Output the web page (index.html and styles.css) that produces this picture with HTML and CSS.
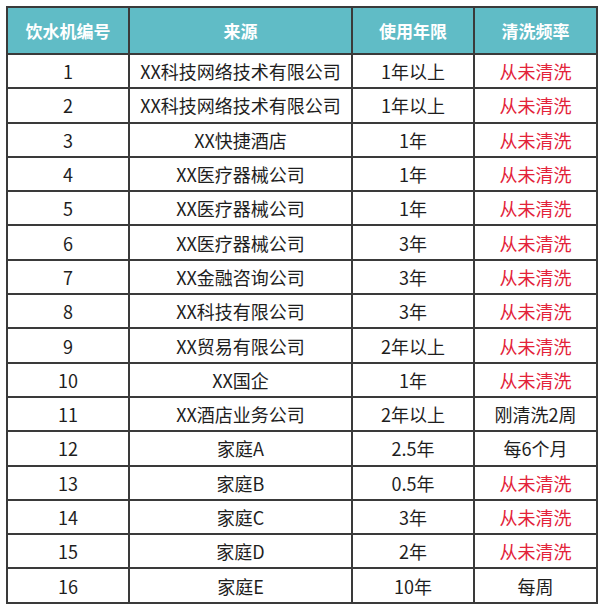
FILE: index.html
```html
<!DOCTYPE html>
<html lang="zh">
<head>
<meta charset="utf-8">
<link rel="stylesheet" href="styles.css">
</head>
<body>
<table class="tbl">
  <colgroup>
    <col class="c1"><col class="c2"><col class="c3"><col class="c4">
  </colgroup>
  <thead>
    <tr><th>饮水机编号</th><th>来源</th><th>使用年限</th><th>清洗频率</th></tr>
  </thead>
  <tbody>
    <tr><td>1</td><td>XX科技网络技术有限公司</td><td>1年以上</td><td class="red">从未清洗</td></tr>
    <tr><td>2</td><td>XX科技网络技术有限公司</td><td>1年以上</td><td class="red">从未清洗</td></tr>
    <tr><td>3</td><td>XX快捷酒店</td><td>1年</td><td class="red">从未清洗</td></tr>
    <tr><td>4</td><td>XX医疗器械公司</td><td>1年</td><td class="red">从未清洗</td></tr>
    <tr><td>5</td><td>XX医疗器械公司</td><td>1年</td><td class="red">从未清洗</td></tr>
    <tr><td>6</td><td>XX医疗器械公司</td><td>3年</td><td class="red">从未清洗</td></tr>
    <tr><td>7</td><td>XX金融咨询公司</td><td>3年</td><td class="red">从未清洗</td></tr>
    <tr><td>8</td><td>XX科技有限公司</td><td>3年</td><td class="red">从未清洗</td></tr>
    <tr><td>9</td><td>XX贸易有限公司</td><td>2年以上</td><td class="red">从未清洗</td></tr>
    <tr><td>10</td><td>XX国企</td><td>1年</td><td class="red">从未清洗</td></tr>
    <tr><td>11</td><td>XX酒店业务公司</td><td>2年以上</td><td>刚清洗2周</td></tr>
    <tr><td>12</td><td>家庭A</td><td>2.5年</td><td>每6个月</td></tr>
    <tr><td>13</td><td>家庭B</td><td>0.5年</td><td class="red">从未清洗</td></tr>
    <tr><td>14</td><td>家庭C</td><td>3年</td><td class="red">从未清洗</td></tr>
    <tr><td>15</td><td>家庭D</td><td>2年</td><td class="red">从未清洗</td></tr>
    <tr><td>16</td><td>家庭E</td><td>10年</td><td>每周</td></tr>
  </tbody>
</table>
</body>
</html>
```

FILE: styles.css
```css
html, body {
  margin: 0;
  padding: 0;
  background: #ffffff;
}
body {
  padding: 6px 0 0 6px;
  font-family: "Noto Sans CJK SC", "Noto Sans", sans-serif;
  color: #1e1e1e;
}
.tbl {
  border-collapse: collapse;
  table-layout: fixed;
  width: 590px;
}
.c1 { width: 122px; }
.c2 { width: 223px; }
.c3 { width: 122px; }
.c4 { width: 123px; }
.tbl th, .tbl td {
  border: 2px solid #3a3a3a;
  text-align: center;
  vertical-align: middle;
  padding: 0;
  font-size: 18px;
  line-height: 1;
  white-space: nowrap;
}
.tbl th {
  background: #60bcc6;
  color: #ffffff;
  font-weight: bold;
  font-size: 17px;
  height: 45px;
}
.tbl td {
  height: 32.3px;
  font-weight: 400;
}
.tbl td.red {
  color: #e3233a;
}
```
